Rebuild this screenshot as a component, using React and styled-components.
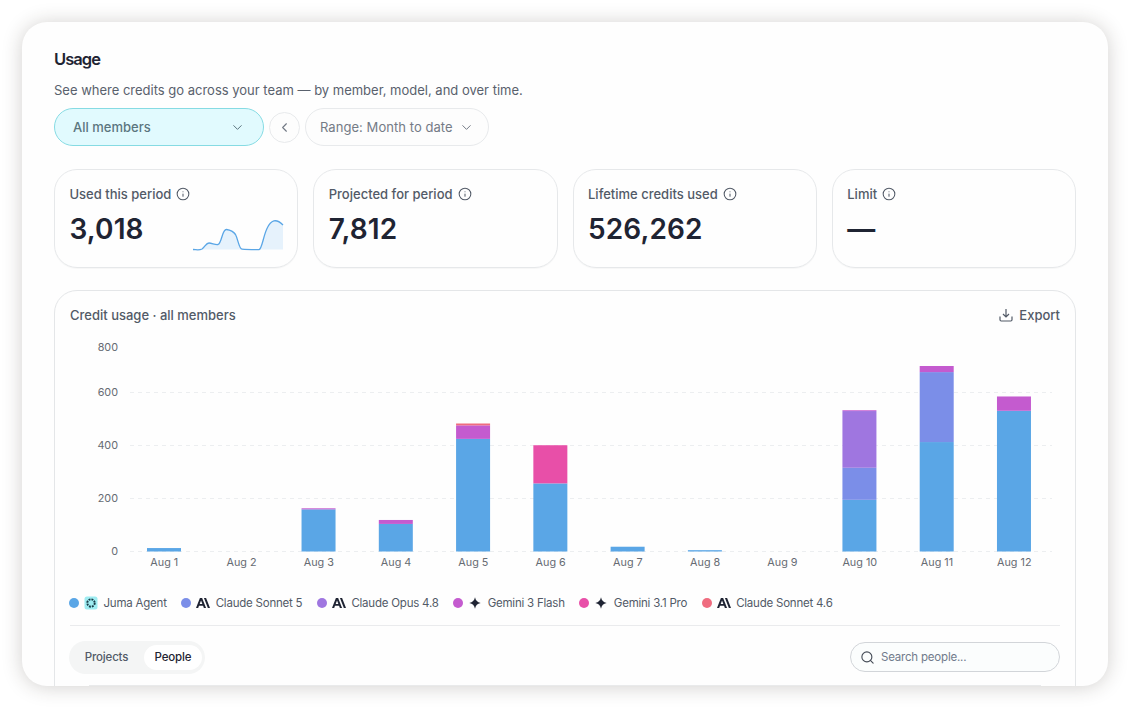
import React from "react";
import styled, { createGlobalStyle } from "styled-components";
import { ChevronDown, ChevronLeft, Info, Search } from "lucide-react";

const GlobalStyle = createGlobalStyle`
  * {
    box-sizing: border-box;
  }
  body {
    margin: 0;
    background: #ffffff;
    font-family: "Inter", "Liberation Sans", sans-serif;
    color: #4b5563;
    overflow: hidden;
  }
`;

const Page = styled.div`
  width: 1130px;
  height: 708px;
  padding: 22px;
  overflow: hidden;
`;

const Panel = styled.main`
  width: 1086px;
  height: 664px;
  padding: 26px 32px 0;
  border-radius: 25px;
  background: #fefefe;
  box-shadow: 0 1px 20px rgba(50, 40, 30, 0.22);
  overflow: hidden;
`;

const Title = styled.h1`
  margin: 0;
  font-size: 16.5px;
  line-height: 22px;
  font-weight: 600;
  letter-spacing: -0.95px;
  color: #1f2433;
`;

const Subtitle = styled.p`
  margin: 10px 0 8px;
  font-size: 13px;
  line-height: 20px;
  letter-spacing: -0.005px;
  color: #59616d;
`;

const Filters = styled.div`
  display: flex;
  align-items: center;
  gap: 5px;
  height: 38px;
`;

const Select = styled.button`
  display: flex;
  align-items: center;
  justify-content: space-between;
  width: ${({ $width }) => $width}px;
  height: 38px;
  padding: ${({ $active }) => ($active ? "0 18px 0 18px" : "0 14px 0 14px")};
  border: 1px solid ${({ $active }) => ($active ? "#86dbe3" : "#e8eaec")};
  border-radius: 19px;
  background: ${({ $active }) => ($active ? "#e1fafe" : "#fdfdfd")};
  color: ${({ $active }) => ($active ? "#5b757e" : "#747b86")};
  font-family: inherit;
  font-size: 13px;
  font-weight: ${({ $active }) => ($active ? 500 : 400)};
  letter-spacing: ${({ $active }) => ($active ? 0 : 0.05)}px;
  white-space: nowrap;
`;

const RoundButton = styled.button`
  display: flex;
  align-items: center;
  justify-content: center;
  width: 31px;
  height: 31px;
  padding: 0;
  border: 1px solid #e8eaec;
  border-radius: 50%;
  background: #fdfdfd;
  color: #747b86;
`;

const Stats = styled.section`
  display: grid;
  grid-template-columns: repeat(4, 1fr);
  gap: 15px;
  margin-top: 23px;
`;

const StatCard = styled.article`
  display: flex;
  justify-content: space-between;
  height: 99px;
  padding: 14px 13px 0 14.5px;
  border: 1px solid #e6e8ea;
  border-radius: 23px;
  box-shadow: 0 1px 1px rgba(0, 0, 0, 0.03);
`;

const StatLabel = styled.div`
  display: flex;
  align-items: center;
  gap: 5px;
  height: 20px;
  font-size: 13px;
  font-weight: 500;
  white-space: nowrap;
  color: #525a67;
`;

const StatValue = styled.div`
  margin-top: 8px;
  font-size: 28px;
  line-height: 34px;
  font-weight: 600;
  letter-spacing: 0.1px;
  color: #1f2433;
`;

const Spark = styled.svg`
  align-self: flex-end;
  flex: none;
  width: 92px;
  height: 34px;
  margin: 0 0 14px -30px;
`;

const UsageCard = styled.section`
  height: 460px;
  margin-top: 22px;
  padding: 0 15px;
  border: 1px solid #e4e6e8;
  border-radius: 23px;
`;

const CardHeader = styled.header`
  display: flex;
  align-items: center;
  justify-content: space-between;
  height: 48px;
  font-size: 13px;
  font-weight: 500;
  color: #525a67;
`;

const ExportButton = styled.button`
  display: flex;
  align-items: center;
  gap: 6px;
  padding: 0;
  border: 0;
  background: none;
  color: inherit;
  font: inherit;
`;

const Chart = styled.svg`
  display: block;
  width: 990px;
  height: 240px;
`;

const Tick = styled.text`
  font-size: 10.8px;
  fill: #666b73;
`;

const Legend = styled.div`
  display: flex;
  align-items: center;
  gap: 14.5px;
  height: 20px;
  margin: 14px 0 0 -1px;
`;

const LegendItem = styled.div`
  display: flex;
  align-items: center;
  gap: 5px;
  font-size: 11.5px;
  letter-spacing: -0.22px;
  white-space: nowrap;
  color: #525a67;
`;

const Dot = styled.span`
  width: 10px;
  height: 10px;
  border-radius: 50%;
  background: ${({ $color }) => $color};
`;

const LegendIcon = styled.svg`
  width: 14px;
  height: 14px;
  margin-right: 0.5px;
`;

const Divider = styled.hr`
  height: 1px;
  margin: 12px 0 15px;
  border: 0;
  background: #eaebed;
`;

const TableBar = styled.div`
  display: flex;
  align-items: center;
  justify-content: space-between;
  height: 33px;
`;

const Tabs = styled.div`
  display: flex;
  width: 136px;
  height: 33px;
  padding: 4px;
  margin-left: -1px;
  border-radius: 17px;
  background: #f4f5f5;
`;

const Tab = styled.button`
  flex: 0 0 ${({ $width }) => $width}px;
  height: 25px;
  padding: ${({ $active }) => ($active ? "0 0 2px" : "0 4px 2px 0")};
  border: 0;
  border-radius: 13px;
  background: ${({ $active }) => ($active ? "#ffffff" : "transparent")};
  color: ${({ $active }) => ($active ? "#1f2433" : "#525a67")};
  font-family: inherit;
  font-size: 11.5px;
  font-weight: 500;
  letter-spacing: -0.15px;
`;

const SearchBox = styled.label`
  display: flex;
  align-items: center;
  gap: 6px;
  width: 210px;
  height: 30px;
  margin-bottom: 1px;
  padding: 0 9px;
  border: 1px solid #d2d5d9;
  border-radius: 15px;
  background: #fbfdfd;
  color: #454c57;
`;

const SearchInput = styled.input`
  min-width: 0;
  flex: 1;
  padding: 0 0 1px;
  border: 0;
  outline: 0;
  background: none;
  font-family: inherit;
  font-size: 11.5px;
  letter-spacing: -0.2px;
  &::placeholder {
    color: #717b8c;
  }
`;

const Table = styled.div`
  height: 40px;
  margin: 11px 19px 0;
  border-top: 1px solid #e9eaeb;
`;

const colors = {
  juma: "#5aa6e6",
  sonnet5: "#7b8ee8",
  opus: "#9f76e0",
  flash: "#c45bcf",
  pro: "#e84fa8",
  sonnet46: "#ef6c7f",
};

const stats = [
  { label: "Used this period", value: "3,018", spark: true },
  { label: "Projected for period", value: "7,812" },
  { label: "Lifetime credits used", value: "526,262" },
  { label: "Limit", value: "—" },
];

const legend = [
  { name: "Juma Agent", color: colors.juma, icon: "juma" },
  { name: "Claude Sonnet 5", color: colors.sonnet5, icon: "claude" },
  { name: "Claude Opus 4.8", color: colors.opus, icon: "claude" },
  { name: "Gemini 3 Flash", color: colors.flash, icon: "gemini" },
  { name: "Gemini 3.1 Pro", color: colors.pro, icon: "gemini" },
  { name: "Claude Sonnet 4.6", color: colors.sonnet46, icon: "claude" },
];

const days = [
  [["juma", 13]],
  [],
  [["juma", 159], ["flash", 4]],
  [["juma", 104], ["flash", 15]],
  [["juma", 425], ["flash", 51], ["sonnet46", 7]],
  [["juma", 257], ["pro", 144]],
  [["juma", 18]],
  [["juma", 5]],
  [],
  [["juma", 195], ["sonnet5", 121], ["opus", 214], ["flash", 3]],
  [["juma", 413], ["sonnet5", 264], ["flash", 23]],
  [["juma", 531], ["flash", 54]],
];

// plot geometry, in px inside the chart svg
const BASE = 212.5;
const SCALE = 0.265;
const LEFT = 60;
const STEP = 77.27;

const ticks = [
  { value: 0, y: BASE },
  { value: 200, y: BASE - 53 },
  { value: 400, y: BASE - 106 },
  { value: 600, y: BASE - 159 },
  { value: 800, y: BASE - 204 },
];

const ModelIcon = ({ type }) => {
  if (type === "juma") {
    return (
      <LegendIcon viewBox="0 0 14 14">
        <rect x="0.5" y="0.5" width="13" height="13" rx="2.5" fill="#9eecf1" />
        <circle
          cx="7"
          cy="7"
          r="3.7"
          fill="none"
          stroke="#173b46"
          strokeWidth="1.9"
          strokeDasharray="1.9 1.006"
        />
      </LegendIcon>
    );
  }
  if (type === "claude") {
    return (
      <LegendIcon viewBox="0 0 24 24" fill="#1f2433">
        <path d="M17.304 3.541h-3.672l6.696 16.918H24zm-10.608 0L0 20.459h3.744l1.37-3.553h7.005l1.37 3.553h3.744L10.536 3.541zm-.371 10.223 2.29-5.946 2.292 5.946z" />
      </LegendIcon>
    );
  }
  return (
    <LegendIcon viewBox="0 0 14 14" fill="#1f2433">
      <path d="M7 1.3C7.7 4.7 9.3 6.3 12.7 7C9.3 7.7 7.7 9.3 7 12.7C6.3 9.3 4.7 7.7 1.3 7C4.7 6.3 6.3 4.7 7 1.3Z" />
    </LegendIcon>
  );
};

const Sparkline = () => (
  <Spark viewBox="0 0 92 34">
    <path
      d="M1 30.5C4 30.5 7 31.5 10 30C13 28 14 24 17 24C20 24 23 26 26 25.5C30 24 30 10 34.5 10.5C38 11 41 12 43.500 15.500C46 20 47 30 50 30.200C55 30.700 62 30.700 67 30.700C70 30 71 18 75 9.500C79 1 84-1 91 6V30.500Z"
      fill="#e6f2fc"
    />
    <path
      d="M1 30.5C4 30.5 7 31.5 10 30C13 28 14 24 17 24C20 24 23 26 26 25.5C30 24 30 10 34.5 10.5C38 11 41 12 43.500 15.500C46 20 47 30 50 30.200C55 30.700 62 30.700 67 30.700C70 30 71 18 75 9.500C79 1 84-1 91 6"
      fill="none"
      stroke="#5aa6e6"
      strokeWidth="1.3"
    />
  </Spark>
);

const DownloadIcon = () => (
  <svg width="14" height="14" viewBox="0 0 14 14" fill="none" stroke="currentColor" strokeWidth="1.2">
    <path d="M7 1v8M4 6l3 3 3-3" />
    <path d="M1 8.500v3.300q0 1.200 1.200 1.200h9.600q1.200 0 1.200-1.200v-3.300" />
  </svg>
);

const Bars = () =>
  days.map((segments, i) => {
    const x = LEFT + 17 + i * STEP;
    let total = 0;
    return (
      <g key={i}>
        {segments.map(([model, value]) => {
          total += value;
          return (
            <rect
              key={model}
              x={x}
              y={BASE - total * SCALE}
              width="34"
              height={value * SCALE}
              fill={colors[model]}
            />
          );
        })}
        <Tick x={x + 17.3} y="227" textAnchor="middle">
          Aug {i + 1}
        </Tick>
      </g>
    );
  });

const App = () => {
  return (
    <>
      <GlobalStyle />
      <Page>
        <Panel>
          <Title>Usage</Title>
          <Subtitle>
            See where credits go across your team — by member, model, and over
            time.
          </Subtitle>
          <Filters>
            <Select $active $width={210}>
              All members
              <ChevronDown size={15} strokeWidth={1.6} />
            </Select>
            <RoundButton>
              <ChevronLeft size={15} strokeWidth={1.8} />
            </RoundButton>
            <Select $width={184}>
              Range: Month to date
              <ChevronDown size={15} strokeWidth={1.6} />
            </Select>
          </Filters>
          <Stats>
            {stats.map((item) => (
              <StatCard key={item.label}>
                <div>
                  <StatLabel>
                    {item.label}
                    <Info size={14} strokeWidth={1.8} />
                  </StatLabel>
                  <StatValue>{item.value}</StatValue>
                </div>
                {item.spark && <Sparkline />}
              </StatCard>
            ))}
          </Stats>
          <UsageCard>
            <CardHeader>
              Credit usage · all members
              <ExportButton>
                <DownloadIcon />
                Export
              </ExportButton>
            </CardHeader>
            <Chart viewBox="0 0 990 240">
              {ticks.map((tick) => (
                <g key={tick.value}>
                  {tick.value < 800 && (
                    <line
                      x1={LEFT}
                      x2="982"
                      y1={tick.y}
                      y2={tick.y}
                      stroke="#eceef0"
                      strokeDasharray="4 4"
                    />
                  )}
                  <Tick x="48" y={tick.y + 3.5} textAnchor="end">
                    {tick.value}
                  </Tick>
                </g>
              ))}
              <Bars />
            </Chart>
            <Legend>
              {legend.map((item) => (
                <LegendItem key={item.name}>
                  <Dot $color={item.color} />
                  <ModelIcon type={item.icon} />
                  {item.name}
                </LegendItem>
              ))}
            </Legend>
            <Divider />
            <TableBar>
              <Tabs>
                <Tab $width={71}>Projects</Tab>
                <Tab $active $width={58}>
                  People
                </Tab>
              </Tabs>
              <SearchBox>
                <Search size={15} strokeWidth={1.8} />
                <SearchInput placeholder="Search people..." />
              </SearchBox>
            </TableBar>
            <Table />
          </UsageCard>
        </Panel>
      </Page>
    </>
  );
};

export default App;
